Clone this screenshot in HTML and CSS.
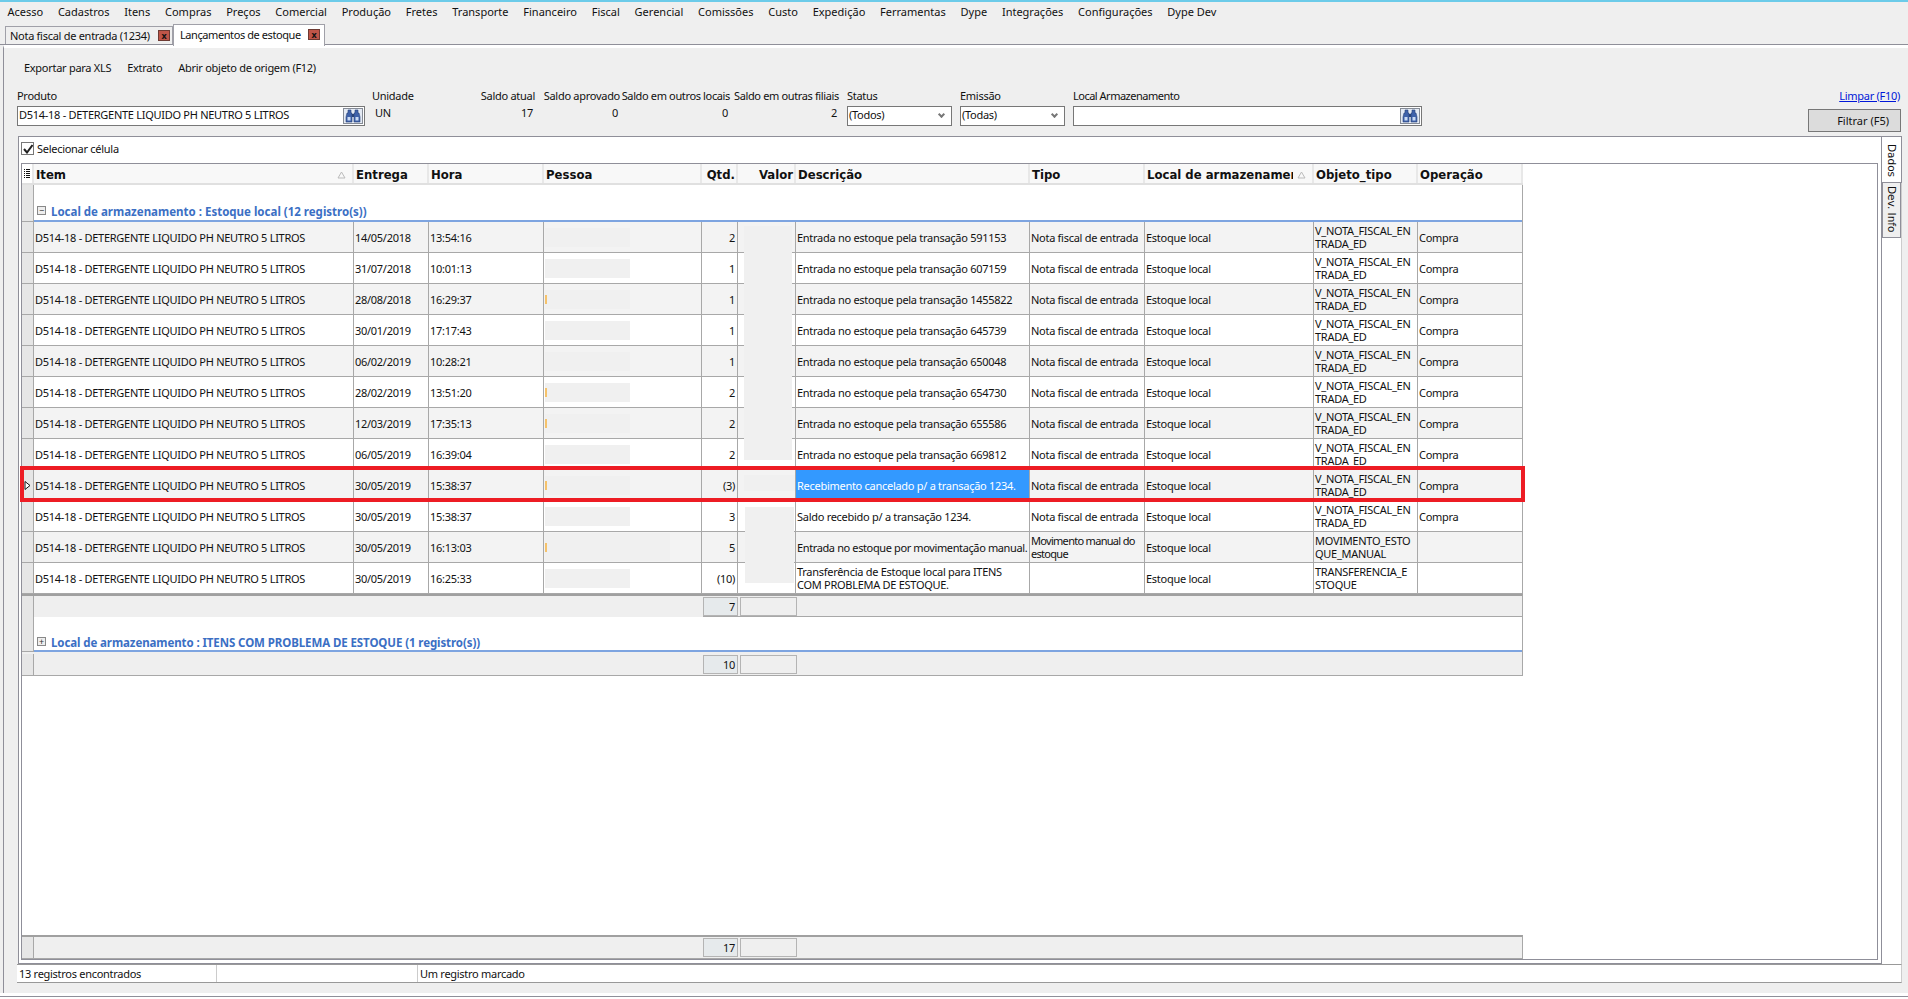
FILE: index.html
```html
<!DOCTYPE html>
<html lang="pt-BR">
<head>
  <meta charset="UTF-8">
  <title>Lançamentos de estoque</title>
  <link rel="stylesheet" href="styles.css">
</head>
<body>
  <div class="stripe"></div>

  <nav class="menubar">
    <span>Acesso</span><span>Cadastros</span><span>Itens</span><span>Compras</span><span>Preços</span><span>Comercial</span><span>Produção</span><span>Fretes</span><span>Transporte</span><span>Financeiro</span><span>Fiscal</span><span>Gerencial</span><span>Comissões</span><span>Custo</span><span>Expedição</span><span>Ferramentas</span><span>Dype</span><span>Integrações</span><span>Configurações</span><span>Dype Dev</span>
  </nav>

  <div class="tabs">
    <div class="tab">Nota fiscal de entrada (1234)<span class="tab-close">x</span></div>
    <div class="tab active">Lançamentos de estoque<span class="tab-close">x</span></div>
  </div>

  <main class="main">
    <div class="toolbar">
      <span>Exportar para XLS</span>
      <span>Extrato</span>
      <span>Abrir objeto de origem (F12)</span>
    </div>

    <div class="filters">
      <div class="field f-produto">
        <label>Produto</label>
        <div class="input">D514-18 - DETERGENTE LIQUIDO PH NEUTRO 5 LITROS
          <span class="find"><svg width="16" height="14" viewBox="0 0 16 14"><path d="M3 1h3v3h1v9H1V8l1-4h1zM10 1h3v3h1l1 4v5H9V4h1z" fill="#3f62aa" stroke="#2a4578" stroke-width=".6"/><path d="M7 5h2v3H7z" fill="#2a4578"/><path d="M2.500 8h3v3.500h-3zM10.500 8h3v3.500h-3z" fill="#c9daf3"/></svg></span>
        </div>
      </div>
      <div class="field f-unidade">
        <label>Unidade</label>
        <div class="value left">UN</div>
      </div>
      <div class="field f-saldo1 right"><label>Saldo atual</label><div class="value">17</div></div>
      <div class="field f-saldo2 right"><label>Saldo aprovado</label><div class="value">0</div></div>
      <div class="field f-saldo3 right"><label>Saldo em outros locais</label><div class="value">0</div></div>
      <div class="field f-saldo4 right"><label>Saldo em outras filiais</label><div class="value">2</div></div>
      <div class="field f-select">
        <label>Status</label>
        <div class="input">(Todos)<span class="arrow"></span></div>
      </div>
      <div class="field f-select">
        <label>Emissão</label>
        <div class="input">(Todas)<span class="arrow"></span></div>
      </div>
      <div class="field f-local">
        <label>Local Armazenamento</label>
        <div class="input">
          <span class="find"><svg width="16" height="14" viewBox="0 0 16 14"><path d="M3 1h3v3h1v9H1V8l1-4h1zM10 1h3v3h1l1 4v5H9V4h1z" fill="#3f62aa" stroke="#2a4578" stroke-width=".6"/><path d="M7 5h2v3H7z" fill="#2a4578"/><path d="M2.500 8h3v3.500h-3zM10.500 8h3v3.500h-3z" fill="#c9daf3"/></svg></span>
        </div>
      </div>
      <div class="actions">
        <a href="#">Limpar (F10)</a>
        <button>Filtrar (F5)</button>
      </div>
    </div>

    <div class="workspace">
      <section class="panel">
        <div class="select-cell"><span class="check"><svg width="10" height="10" viewBox="0 0 10 10"><path d="M1 5l3 3.500L9.500 1" fill="none" stroke="#222" stroke-width="2"/></svg></span>Selecionar célula</div>

        <div class="grid">
          <div class="cols head">
            <div class="rowhead"><svg width="6" height="9" viewBox="0 0 6 9"><path d="M0 .5h1M2 .5h4M0 2.500h1M2 2.500h4M0 4.500h1M2 4.500h4M0 6.500h1M2 6.500h4M0 8.500h1M2 8.500h4" stroke="#111"/></svg></div>
            <div class="sorted">Item<svg class="sort" width="9" height="8" viewBox="0 0 9 8"><path d="M4.500 1L8 7H1z" fill="none" stroke="#bbb"/></svg></div>
            <div>Entrega</div><div>Hora</div><div>Pessoa</div>
            <div class="num">Qtd.</div><div class="num">Valor</div>
            <div>Descrição</div><div>Tipo</div>
            <div class="sorted clip"><span>Local de armazenamento</span><svg class="sort" width="9" height="8" viewBox="0 0 9 8"><path d="M4.500 1L8 7H1z" fill="none" stroke="#bbb"/></svg></div>
            <div>Objeto_tipo</div><div>Operação</div>
          </div>

          <div class="group"><div class="rowhead"></div><div class="group-title"><span class="toggle">−</span>Local de armazenamento : Estoque local (12 registro(s))</div></div>

          <div class="cols row odd">
            <div class="rowhead"></div><div>D514-18 - DETERGENTE LIQUIDO PH NEUTRO 5 LITROS</div><div>14/05/2018</div><div>13:54:16</div><div><span class="blank"></span></div><div class="num">2</div><div></div><div>Entrada no estoque pela transação 591153</div><div>Nota fiscal de entrada</div><div>Estoque local</div><div>V_NOTA_FISCAL_EN<br>TRADA_ED</div><div>Compra</div>
          </div>
          <div class="cols row">
            <div class="rowhead"></div><div>D514-18 - DETERGENTE LIQUIDO PH NEUTRO 5 LITROS</div><div>31/07/2018</div><div>10:01:13</div><div><span class="blank"></span></div><div class="num">1</div><div></div><div>Entrada no estoque pela transação 607159</div><div>Nota fiscal de entrada</div><div>Estoque local</div><div>V_NOTA_FISCAL_EN<br>TRADA_ED</div><div>Compra</div>
          </div>
          <div class="cols row odd">
            <div class="rowhead"></div><div>D514-18 - DETERGENTE LIQUIDO PH NEUTRO 5 LITROS</div><div>28/08/2018</div><div>16:29:37</div><div><span class="blank mark"></span></div><div class="num">1</div><div></div><div>Entrada no estoque pela transação 1455822</div><div>Nota fiscal de entrada</div><div>Estoque local</div><div>V_NOTA_FISCAL_EN<br>TRADA_ED</div><div>Compra</div>
          </div>
          <div class="cols row">
            <div class="rowhead"></div><div>D514-18 - DETERGENTE LIQUIDO PH NEUTRO 5 LITROS</div><div>30/01/2019</div><div>17:17:43</div><div><span class="blank"></span></div><div class="num">1</div><div></div><div>Entrada no estoque pela transação 645739</div><div>Nota fiscal de entrada</div><div>Estoque local</div><div>V_NOTA_FISCAL_EN<br>TRADA_ED</div><div>Compra</div>
          </div>
          <div class="cols row odd">
            <div class="rowhead"></div><div>D514-18 - DETERGENTE LIQUIDO PH NEUTRO 5 LITROS</div><div>06/02/2019</div><div>10:28:21</div><div><span class="blank"></span></div><div class="num">1</div><div></div><div>Entrada no estoque pela transação 650048</div><div>Nota fiscal de entrada</div><div>Estoque local</div><div>V_NOTA_FISCAL_EN<br>TRADA_ED</div><div>Compra</div>
          </div>
          <div class="cols row">
            <div class="rowhead"></div><div>D514-18 - DETERGENTE LIQUIDO PH NEUTRO 5 LITROS</div><div>28/02/2019</div><div>13:51:20</div><div><span class="blank mark"></span></div><div class="num">2</div><div></div><div>Entrada no estoque pela transação 654730</div><div>Nota fiscal de entrada</div><div>Estoque local</div><div>V_NOTA_FISCAL_EN<br>TRADA_ED</div><div>Compra</div>
          </div>
          <div class="cols row odd">
            <div class="rowhead"></div><div>D514-18 - DETERGENTE LIQUIDO PH NEUTRO 5 LITROS</div><div>12/03/2019</div><div>17:35:13</div><div><span class="blank mark"></span></div><div class="num">2</div><div></div><div>Entrada no estoque pela transação 655586</div><div>Nota fiscal de entrada</div><div>Estoque local</div><div>V_NOTA_FISCAL_EN<br>TRADA_ED</div><div>Compra</div>
          </div>
          <div class="cols row">
            <div class="rowhead"></div><div>D514-18 - DETERGENTE LIQUIDO PH NEUTRO 5 LITROS</div><div>06/05/2019</div><div>16:39:04</div><div><span class="blank"></span></div><div class="num">2</div><div></div><div>Entrada no estoque pela transação 669812</div><div>Nota fiscal de entrada</div><div>Estoque local</div><div>V_NOTA_FISCAL_EN<br>TRADA_ED</div><div>Compra</div>
          </div>
          <div class="cols row odd">
            <div class="rowhead"><svg width="7" height="9" viewBox="0 0 7 9"><path d="M1 .5L6 4.500 1 8.500z" fill="#fff" stroke="#111"/></svg></div><div>D514-18 - DETERGENTE LIQUIDO PH NEUTRO 5 LITROS</div><div>30/05/2019</div><div>15:38:37</div><div><span class="blank mark"></span></div><div class="num">(3)</div><div></div><div class="picked">Recebimento cancelado p/ a transação 1234.</div><div>Nota fiscal de entrada</div><div>Estoque local</div><div>V_NOTA_FISCAL_EN<br>TRADA_ED</div><div>Compra</div>
          </div>
          <div class="cols row">
            <div class="rowhead"></div><div>D514-18 - DETERGENTE LIQUIDO PH NEUTRO 5 LITROS</div><div>30/05/2019</div><div>15:38:37</div><div><span class="blank"></span></div><div class="num">3</div><div></div><div>Saldo recebido p/ a transação 1234.</div><div>Nota fiscal de entrada</div><div>Estoque local</div><div>V_NOTA_FISCAL_EN<br>TRADA_ED</div><div>Compra</div>
          </div>
          <div class="cols row odd">
            <div class="rowhead"></div><div>D514-18 - DETERGENTE LIQUIDO PH NEUTRO 5 LITROS</div><div>30/05/2019</div><div>16:13:03</div><div><span class="blank wide mark"></span></div><div class="num">5</div><div></div><div class="tight">Entrada no estoque por movimentação manual.</div><div class="tighter">Movimento manual do<br>estoque</div><div>Estoque local</div><div>MOVIMENTO_ESTO<br>QUE_MANUAL</div><div></div>
          </div>
          <div class="cols row">
            <div class="rowhead"></div><div>D514-18 - DETERGENTE LIQUIDO PH NEUTRO 5 LITROS</div><div>30/05/2019</div><div>16:25:33</div><div><span class="blank"></span></div><div class="num">(10)</div><div></div><div>Transferência de Estoque local para ITENS<br>COM PROBLEMA DE ESTOQUE.</div><div></div><div>Estoque local</div><div>TRANSFERENCIA_E<br>STOQUE</div><div></div>
          </div>

          <div class="cols foot">
            <div class="rowhead"></div><div class="foot-fill"></div><div class="total">7</div><div class="total empty"></div>
          </div>

          <div class="group second"><div class="rowhead"></div><div class="group-title"><span class="toggle">+</span>Local de armazenamento : ITENS COM PROBLEMA DE ESTOQUE (1 registro(s))</div></div>

          <div class="cols foot after-group">
            <div class="rowhead"></div><div class="foot-fill"></div><div class="total">10</div><div class="total empty"></div>
          </div>

          <div class="grid-space"></div>

          <div class="cols foot grand">
            <div class="rowhead"></div><div class="foot-fill"></div><div class="total">17</div><div class="total empty"></div>
          </div>

          <!-- borrões sobre a coluna Valor e o destaque vermelho -->
          <div class="smear s1"></div>
          <div class="smear s2"></div>
          <div class="smear s3"></div>
          <div class="highlight"></div>
        </div>
      </section>

      <aside class="side-tabs">
        <div class="side-tab on">Dados</div>
        <div class="side-tab">Dev. Info</div>
      </aside>
    </div>

    <footer class="statusbar">
      <div class="st1">13 registros encontrados</div>
      <div class="st2"></div>
      <div class="st3">Um registro marcado</div>
    </footer>
  </main>

  <div class="bottom-line"></div>
</body>
</html>
```

FILE: styles.css
```css
* {
  box-sizing: border-box;
}

html, body {
  height: 100%;
}

body {
  margin: 0;
  width: 1908px;
  height: 999px;
  overflow: hidden;
  display: flex;
  flex-direction: column;
  background-color: #efefef;
  color: #111;
  font-family: "Noto Sans", "Liberation Sans", sans-serif;
  font-size: 11px;
  letter-spacing: -0.28px;
  white-space: nowrap;
}

.stripe {
  height: 2px;
  background-color: #6ccbe9;
}

.menubar {
  height: 22px;
  display: flex;
  align-items: center;
  padding-bottom: 4px;
  letter-spacing: 0;
}

.menubar span {
  padding: 0 7.4px;
}

.tabs {
  height: 21px;
  display: flex;
  align-items: flex-end;
  padding-left: 5px;
  border-bottom: 1px solid #8f8f99;
}

.tab {
  height: 18px;
  width: 168px;
  display: flex;
  align-items: center;
  justify-content: space-between;
  padding: 0 2px 0 4px;
  border: 1px solid #a0a0a8;
  border-bottom: none;
}

.tab.active {
  position: relative;
  top: 2px;
  height: 22px;
  width: 152px;
  padding: 0 4px 3px 6px;
  background-color: #fff;
  letter-spacing: -0.42px;
}

.tab-close {
  width: 12px;
  height: 11px;
  display: flex;
  align-items: center;
  justify-content: center;
  border: 1px solid #6d3a33;
  background-color: #bf5548;
  color: #111;
  font-size: 9px;
  font-weight: bold;
  line-height: 1;
}

.main {
  flex: 1;
  min-height: 0;
  display: flex;
  flex-direction: column;
  margin-left: 3px;
  border-left: 1px solid #8f8f99;
  border-top: 3px solid #fff;
  padding: 0 6px 10px 14px;
}

.toolbar {
  height: 38px;
  display: flex;
  align-items: center;
  gap: 16px;
  padding: 1px 0 0 6px;
}

.filters {
  height: 50px;
  display: flex;
  padding-top: 3px;
  margin-left: -1px;
}

.field label {
  display: block;
  height: 14px;
  line-height: 14px;
}

.field.right {
  text-align: right;
}

.f-produto { width: 355px; }
.f-unidade { width: 95px; }
.f-saldo1 { width: 68px; }
.f-saldo2 { width: 85px; }
.f-saldo3 { width: 110px; letter-spacing: -0.36px; }
.f-saldo4 { width: 109px; margin-right: 8px; letter-spacing: -0.36px; }
.f-select { width: 105px; margin-right: 8px; }
.f-local { width: 349px; letter-spacing: -0.5px; }

.f-produto .input { width: 348px; }

.input {
  position: relative;
  height: 20px;
  margin-top: 3px;
  display: flex;
  align-items: center;
  padding: 0 0 3px 1px;
  border: 1px solid #777;
  background-color: #fff;
}

.value {
  padding-top: 2px;
  padding-right: 2px;
}

.value.left {
  padding-left: 3px;
}

.find {
  position: absolute;
  right: 1px;
  top: 1px;
  width: 20px;
  height: 16px;
  display: flex;
  align-items: center;
  justify-content: center;
  border: 1px solid #858b96;
  background-color: #e4eaf4;
}

.arrow {
  position: absolute;
  right: 7px;
  top: 5px;
  width: 5px;
  height: 5px;
  border-right: 2px solid #777;
  border-bottom: 2px solid #777;
  transform: rotate(45deg);
}

.actions {
  margin-left: auto;
  padding-right: 1px;
  display: flex;
  flex-direction: column;
  align-items: flex-end;
  width: 94px;
}

.actions a {
  color: #0018d8;
  height: 14px;
  line-height: 14px;
  margin-right: 1px;
}

.actions button {
  margin-top: 6px;
  width: 93px;
  height: 23px;
  padding: 0 11px 0 0;
  text-align: right;
  font: inherit;
  color: #111;
  border: 1px solid #777;
  background-color: #dcdcdc;
}

.workspace {
  flex: 1;
  min-height: 0;
  display: flex;
  border-top: 1px solid #8f8f99;
}

.panel {
  width: 1864px;
  display: flex;
  flex-direction: column;
  padding: 0 3px 3px 2px;
  background-color: #fff;
  border-left: 1px solid #8f8f99;
  border-right: 1px solid #8f8f99;
  border-bottom: 1px solid #8f8f99;
}

.select-cell {
  height: 26px;
  display: flex;
  align-items: center;
  gap: 3px;
  padding-bottom: 3px;
}

.check {
  width: 13px;
  height: 13px;
  display: flex;
  align-items: center;
  justify-content: center;
  border: 1px solid #777;
  background-color: #fff;
}

.grid {
  position: relative;
  flex: 1;
  display: flex;
  flex-direction: column;
  border: 1px solid #8f8f99;
}

.cols {
  display: grid;
  width: 1501px;
  grid-template-columns: 12px 320px 75px 115px 158px 36px 58px 234px 115px 169px 104px 105px;
}

.head {
  height: 21px;
  background-color: #f8f8f8;
  border-bottom: 2px solid #e0e0e0;
  font-family: "DejaVu Sans", sans-serif;
  font-size: 11.7px;
  font-weight: bold;
  letter-spacing: 0;
}

.head > div {
  display: flex;
  align-items: center;
  padding: 2px 0 0 2px;
  border-right: 2px solid #e8e8e8;
}

.head .num {
  justify-content: flex-end;
  padding-right: 1px;
}

.head .sorted {
  justify-content: space-between;
  padding-right: 6px;
}

.head .clip span {
  width: 146px;
  overflow: hidden;
}

.head .rowhead {
  padding: 0;
  justify-content: center;
  background-color: #fff;
}

.rowhead {
  background-color: #e6e6e6;
  border-right: 1px solid #a8a8a8;
}

.group {
  height: 37px;
  width: 1501px;
  display: flex;
  background-color: #fff;
  border-right: 1px solid #a8a8a8;
}

.group .rowhead {
  width: 12px;
  border-bottom: 1px solid #a8a8a8;
}

.group-title {
  flex: 1;
  display: flex;
  align-items: flex-end;
  padding: 0 0 1px 3px;
  border-bottom: 2px solid #7da4e0;
  color: #3b6fc4;
  font-size: 11.5px;
  font-weight: bold;
  letter-spacing: 0;
}

.group.second {
  height: 35px;
}

.group.second .group-title {
  padding-bottom: 0;
  letter-spacing: -0.1px;
}

.toggle {
  width: 9px;
  height: 9px;
  margin: 0 5px 4px 0;
  display: flex;
  align-items: center;
  justify-content: center;
  border: 1px solid #888;
  background-color: #eee;
  color: #333;
  font-size: 9px;
  font-weight: normal;
  line-height: 1;
}

.row {
  height: 31px;
  border-right: 1px solid #a8a8a8;
  background-color: #fff;
  line-height: 13px;
}

.row.odd {
  background-color: #f3f3f3;
}

.row > div {
  display: flex;
  align-items: center;
  padding: 0 2px 0 1px;
  border-right: 1px solid #a8a8a8;
  border-bottom: 1px solid #a8a8a8;
}

.row > .rowhead {
  padding: 0;
  justify-content: center;
}

.row .num {
  justify-content: flex-end;
}

.row .picked {
  background-color: #3399ff;
  color: #fff;
}

.row .tight {
  letter-spacing: -0.38px;
}

.row .tighter {
  letter-spacing: -0.7px;
}

.blank {
  width: 85px;
  height: 19px;
  background-color: #f0f0f0;
}

.blank.wide {
  width: 125px;
  height: 28px;
}

.blank.mark {
  background-image: linear-gradient(#f5c26b, #f5c26b);
  background-size: 2px 9px;
  background-repeat: no-repeat;
  background-position: left center;
}

.foot {
  height: 23px;
  background-color: #efefef;
  border-top: 2px solid #a0a0a0;
  border-right: 1px solid #a8a8a8;
  border-bottom: 1px solid #a8a8a8;
  grid-template-columns: 12px 669px 37px 58px;
}

.foot.after-group {
  height: 24px;
  border-top: none;
  padding-top: 2px;
}

.foot .rowhead {
  background-color: #e6e6e6;
}

.foot-fill {
  background-color: #efefef;
}

.total {
  margin: 1px 2px 1px 0;
  padding: 1px 2px;
  text-align: right;
  background-color: #e6eaec;
  border: 1px solid #b4b4b4;
}

.total.empty {
  margin-right: 1px;
  background-color: #efefef;
}

.foot.grand {
  height: 24px;
  max-width: 1501px;
}

.grid-space {
  flex: 1;
}

.smear {
  position: absolute;
  background-color: #f0f0f0;
}

.s1 { left: 722px; top: 62px; width: 48px; height: 234px; }
.s2 { left: 722px; top: 311px; width: 51px; height: 16px; }
.s3 { left: 723px; top: 343px; width: 49px; height: 76px; }

.highlight {
  position: absolute;
  left: -2px;
  top: 302px;
  width: 1505px;
  height: 36px;
  border: 4px solid #ed1c24;
}

.side-tabs {
  width: 20px;
  display: flex;
  flex-direction: column;
  background-color: #fff;
  border-right: 1px solid #ccc;
}

.side-tab {
  display: flex;
  align-items: center;
  justify-content: flex-start;
  writing-mode: vertical-rl;
  font-family: "DejaVu Sans", sans-serif;
  font-size: 10.5px;
  letter-spacing: 0;
}

.side-tab.on {
  height: 46px;
  width: 20px;
  padding-top: 7px;
  border-right: 1px solid #8f8f99;
  border-bottom: 1px solid #8f8f99;
}

.side-tab:not(.on) {
  height: 55px;
  width: 19px;
  padding-top: 3px;
  background-color: #efefef;
  border: 1px solid #8f8f99;
  border-top: none;
}

.statusbar {
  height: 19px;
  display: flex;
  align-items: center;
  margin-left: -1px;
  background-color: #fff;
  border-top: 1px solid #999;
  border-bottom: 1px solid #999;
  border-right: 1px solid #ccc;
}

.statusbar > div {
  height: 100%;
  display: flex;
  align-items: center;
  padding-left: 2px;
}

.st1 { width: 200px; border-right: 1px solid #ccc; }
.st2 { width: 201px; border-right: 1px solid #ccc; }
.st3 { flex: 1; }

.bottom-line {
  height: 6px;
  padding-top: 3px;
  background-color: #fff;
}

.bottom-line::after {
  content: "";
  display: block;
  height: 1px;
  background-color: #8f8f99;
}
```
